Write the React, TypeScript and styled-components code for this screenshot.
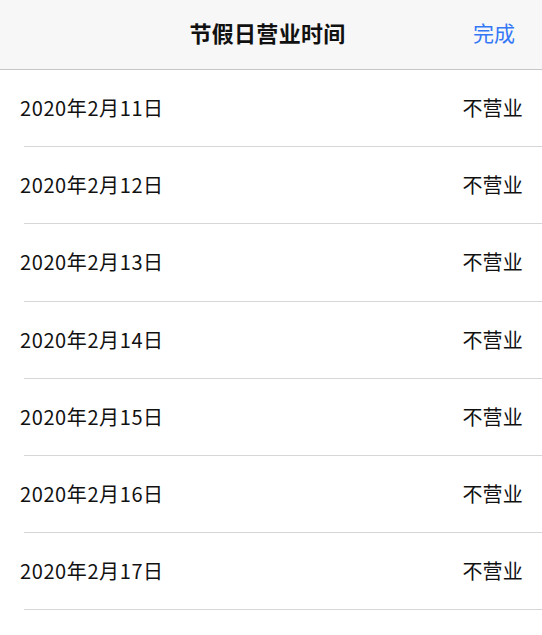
import React from "react";
import styled, { createGlobalStyle } from "styled-components";

const GlobalStyle = createGlobalStyle`
  html, body {
    margin: 0;
    padding: 0;
    background: #ffffff;
    font-family: "Noto Sans CJK SC", "Noto Sans", sans-serif;
  }
`;

const Page = styled.div`
  width: 542px;
  min-height: 635px;
  background: #fff;
`;

const Header = styled.div`
  height: 70px;
  box-sizing: border-box;
  background: #f7f7f7;
  border-bottom: 1px solid #c6c6c8;
  display: grid;
  grid-template-columns: 1fr auto 1fr;
  align-items: center;
  padding: 0 27px 5px 20px;
`;

const Title = styled.div`
  grid-column: 2;
  font-size: 22px;
  font-weight: 700;
  color: #111;
  letter-spacing: 0.3px;
`;

const Done = styled.div`
  justify-self: end;
  font-size: 21px;
  color: #3478f6;
`;

const List = styled.div`
  display: flex;
  flex-direction: column;
`;

const Row = styled.div`
  height: 77.2px;
  box-sizing: border-box;
  display: flex;
  align-items: center;
  justify-content: space-between;
  padding: 0 20px 2px;
  position: relative;
  font-size: 20px;
  color: #111;

  &::after {
    content: "";
    position: absolute;
    left: 24px;
    right: 0;
    bottom: 0;
    height: 1px;
    background: #d6d6d8;
  }
`;

const DateText = styled.span`
  letter-spacing: 0.6px;
`;

const Status = styled.span`
  letter-spacing: 0.2px;
  margin-right: -1px;
`;

const days = [11, 12, 13, 14, 15, 16, 17];

export default function App() {
  return (
    <Page>
      <GlobalStyle />
      <Header>
        <Title>节假日营业时间</Title>
        <Done>完成</Done>
      </Header>
      <List>
        {days.map((d) => (
          <Row key={d}>
            <DateText>{`2020年2月${d}日`}</DateText>
            <Status>不营业</Status>
          </Row>
        ))}
      </List>
    </Page>
  );
}
